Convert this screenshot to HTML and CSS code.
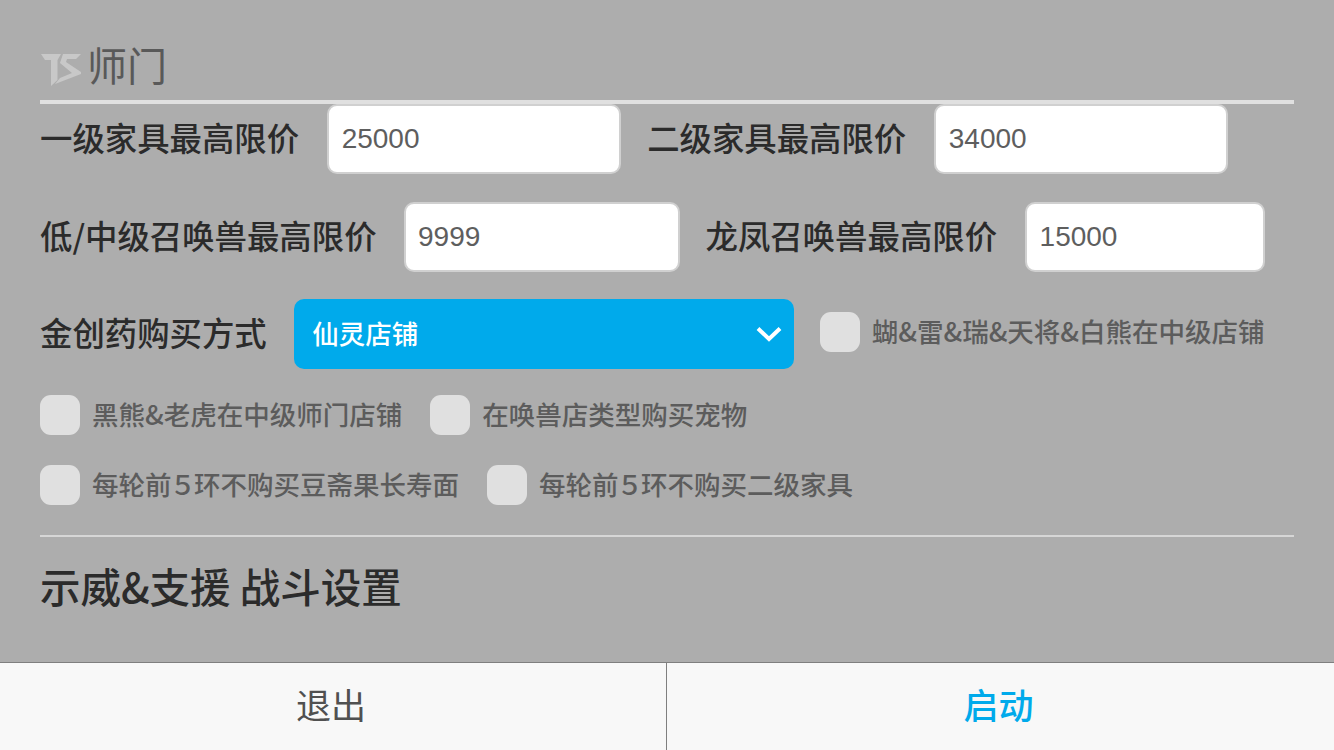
FILE: index.html
```html
<!DOCTYPE html>
<html lang="zh">
<head>
    <meta charset="UTF-8">
    <title>师门</title>
    <link rel="stylesheet" href="styles.css">
</head>
<body>
    <div class="content">
        <div class="title">
            <svg class="logo" viewBox="0 0 40 32" width="40" height="32">
                <path d="M0 0H20L16.500 6V26L10 32V6H4Z" fill="#c8c8c8"/>
                <path d="M22 0H40L35 5H26L25 8L40 18V20L14 30L19 24L31 19L19 9Z" fill="#c8c8c8"/>
            </svg>
            <span>师门</span>
        </div>

        <div class="row row-first">
            <label class="field-label">一级家具最高限价</label>
            <input class="input input-a" type="text" value="25000">
            <label class="field-label label-second">二级家具最高限价</label>
            <input class="input input-a" type="text" value="34000">
        </div>

        <div class="row row-second">
            <label class="field-label">低/中级召唤兽最高限价</label>
            <input class="input input-b" type="text" value="9999">
            <label class="field-label label-second">龙凤召唤兽最高限价</label>
            <input class="input input-c" type="text" value="15000">
        </div>

        <div class="row row-third">
            <label class="field-label">金创药购买方式</label>
            <div class="select">
                <span>仙灵店铺</span>
                <svg class="chevron" viewBox="0 0 26 16" width="26" height="16">
                    <path d="M2 2.500L13 13L24 2.500" fill="none" stroke="#fff" stroke-width="4"/>
                </svg>
            </div>
            <div class="check check-inline"><i class="box"></i><span>蝴&amp;雷&amp;瑞&amp;天将&amp;白熊在中级店铺</span></div>
        </div>

        <div class="row row-checks">
            <div class="check"><i class="box"></i><span>黑熊&amp;老虎在中级师门店铺</span></div>
            <div class="check"><i class="box"></i><span>在唤兽店类型购买宠物</span></div>
        </div>

        <div class="row row-checks row-checks-last">
            <div class="check"><i class="box"></i><span>每轮前<b class="num">５</b>环不购买豆斋果长寿面</span></div>
            <div class="check"><i class="box"></i><span>每轮前<b class="num">５</b>环不购买二级家具</span></div>
        </div>

        <div class="divider"></div>
        <h2 class="section-title">示威&amp;支援 战斗设置</h2>
    </div>

    <div class="footer">
        <div class="footer-btn footer-quit">退出</div>
        <div class="footer-btn footer-start">启动</div>
    </div>
</body>
</html>
```

FILE: styles.css
```css
* {
    margin: 0;
    padding: 0;
    box-sizing: border-box;
}

body {
    width: 1334px;
    height: 750px;
    overflow: hidden;
    display: flex;
    flex-direction: column;
    background-color: #adadad;
    font-family: "Noto Sans CJK SC", "Noto Sans", sans-serif;
}

.content {
    flex: 1;
    padding: 0 40px;
}

.title {
    height: 104px;
    padding-top: 37px;
    display: flex;
    align-items: flex-start;
    gap: 6px;
    border-bottom: 4px solid #e0e0e0;
    font-size: 40px;
    line-height: 54px;
    color: #595959;
}

.logo {
    margin: 17px 0 0 1px;
}

.row {
    display: flex;
    align-items: center;
}

.row-first {
    height: 70px;
}

.row-second {
    height: 70px;
    margin-top: 28px;
}

.row-third {
    height: 70px;
    margin-top: 27px;
}

.field-label {
    padding-bottom: 4px;
    font-size: 32.400px;
    line-height: 40px;
    font-weight: 500;
    color: #2b2b2b;
    white-space: nowrap;
}

.label-second {
    margin-left: 26px;
}

.input {
    height: 70px;
    margin-left: 28px;
    padding: 0 12.500px;
    border: 2px solid #d0d0d0;
    border-radius: 10px;
    background-color: #fff;
    font-family: "Liberation Sans", sans-serif;
    font-size: 28px;
    color: #5e5e5e;
    outline: none;
}

.input-a {
    width: 294px;
}

.input-b {
    width: 276px;
    margin-left: 27px;
}

.input-c {
    width: 240px;
}

.select {
    width: 500px;
    height: 70px;
    margin-left: 27px;
    padding: 0 12px 0 18.500px;
    display: flex;
    align-items: center;
    justify-content: space-between;
    border-radius: 10px;
    background-color: #00aaeb;
    font-size: 26.500px;
    font-weight: 500;
    color: #fff;
}

.select span {
    padding-bottom: 4px;
}

.check {
    display: flex;
    align-items: center;
    gap: 12px;
    font-size: 26.500px;
    font-weight: 500;
    color: #5c5c5c;
    white-space: nowrap;
}

.check span {
    padding-bottom: 4px;
}

.num {
    margin: 0 -2px;
    font-weight: 500;
}

.check-inline {
    margin: -4px 0 0 26px;
}

.box {
    display: block;
    width: 40px;
    height: 40px;
    border-radius: 11px;
    background-color: #e0e0e0;
}

.row-checks {
    height: 40px;
    gap: 28px;
    margin-top: 26px;
}

.row-checks-last {
    margin-top: 30px;
}

.divider {
    height: 2px;
    margin-top: 30px;
    background-color: #d6d6d6;
}

.section-title {
    margin-top: 22px;
    font-size: 40.500px;
    line-height: 54px;
    font-weight: 500;
    color: #2b2b2b;
}

.footer {
    height: 88px;
    display: flex;
    border-top: 1px solid #7f7f7f;
    background-color: #f8f8f8;
}

.footer-btn {
    display: flex;
    align-items: center;
    justify-content: center;
    padding: 0 4px 6px 0;
    font-size: 35px;
    color: #505050;
}

.footer-quit {
    width: 666px;
}

.footer-start {
    flex: 1;
    border-left: 1px solid #7f7f7f;
    font-weight: 500;
    color: #00aaeb;
}
```
